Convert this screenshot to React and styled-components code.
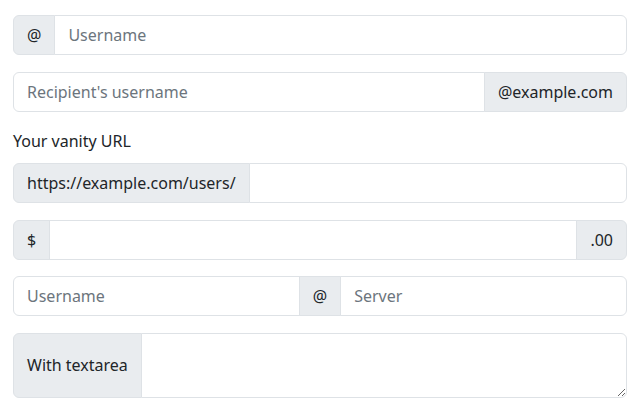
import React from "react";
import styled, { createGlobalStyle } from "styled-components";

const GlobalStyle = createGlobalStyle`
  body {
    margin: 0;
    background: #fff;
    font-family: "Noto Sans", "Noto Sans CJK KR", sans-serif;
    color: #212529;
  }
  * { box-sizing: border-box; }
`;

const Page = styled.div`
  padding: 15px 13px;
`;

const Group = styled.div`
  display: flex;
  align-items: stretch;
  width: 100%;
  margin-bottom: 16.67px;
  height: ${(p) => (p.$tall ? "65px" : "40px")};

  & > *:not(:first-child) {
    margin-left: -1px;
  }
  & > *:first-child {
    border-top-left-radius: 6px;
    border-bottom-left-radius: 6px;
  }
  & > *:last-child {
    border-top-right-radius: 6px;
    border-bottom-right-radius: 6px;
  }
`;

const Addon = styled.span`
  display: flex;
  align-items: center;
  padding: 0 13px;
  font-size: 16px;
  line-height: 26px;
  color: #212529;
  background: #e9ecef;
  border: 1px solid #dee2e6;
  white-space: nowrap;
`;

const Input = styled.input`
  flex: 1 1 auto;
  width: 1%;
  min-width: 0;
  padding: 6px 13px;
  font-family: inherit;
  font-size: 16px;
  line-height: 26px;
  color: #212529;
  background: #fff;
  border: 1px solid #dee2e6;
  border-radius: 0;
  outline: none;

  &::placeholder {
    color: #6c757d;
  }
`;

const TextArea = styled.textarea`
  flex: 1 1 auto;
  width: 1%;
  min-width: 0;
  padding: 6px 13px;
  font-family: inherit;
  font-size: 16px;
  line-height: 26px;
  border: 1px solid #dee2e6;
  border-radius: 0;
  outline: none;
  resize: vertical;
`;

const Label = styled.label`
  display: block;
  font-size: 16px;
  line-height: 26px;
  margin-bottom: 8.6px;
`;

export default function App() {
  return (
    <Page>
      <GlobalStyle />
      <Group>
        <Addon>@</Addon>
        <Input placeholder="Username" />
      </Group>

      <Group>
        <Input placeholder="Recipient's username" />
        <Addon>@example.com</Addon>
      </Group>

      <Label>Your vanity URL</Label>
      <Group>
        <Addon>https://example.com/users/</Addon>
        <Input />
      </Group>

      <Group>
        <Addon>$</Addon>
        <Input />
        <Addon>.00</Addon>
      </Group>

      <Group>
        <Input placeholder="Username" />
        <Addon>@</Addon>
        <Input placeholder="Server" />
      </Group>

      <Group $tall>
        <Addon>With textarea</Addon>
        <TextArea />
      </Group>
    </Page>
  );
}
